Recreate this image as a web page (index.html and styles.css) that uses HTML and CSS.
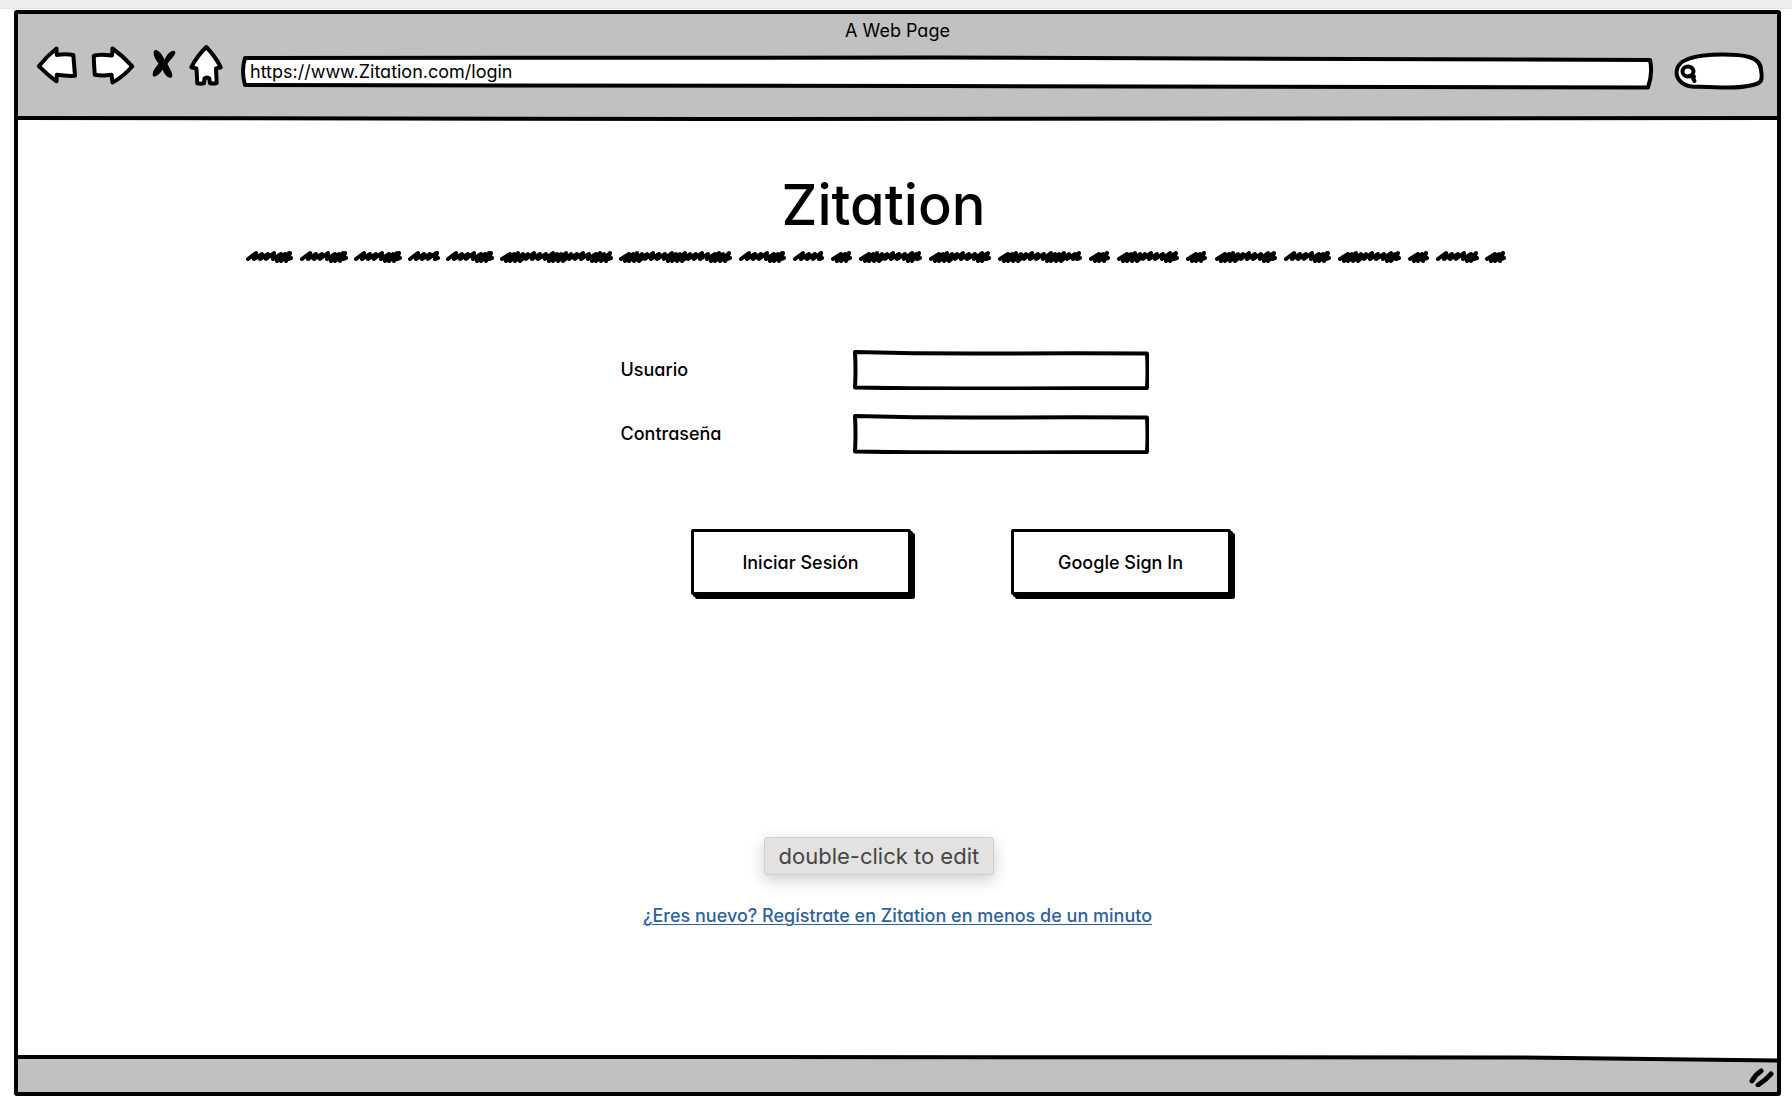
FILE: index.html
```
<!DOCTYPE html>
<html lang="es">
<head>
<meta charset="utf-8">
<title>Zitation</title>
<link rel="stylesheet" href="styles.css">
</head>
<body>
<div class="strip"></div>
<div class="window">
  <header class="chrome">
    <div class="chrome-title">A Web Page</div>
    <div class="toolbar">
      <nav class="nav">
        <button type="button" aria-label="Atrás"><svg class="icon" width="42" height="44" viewBox="0 0 42 44"><path d="M2.8 23.2Q11 13 20.5 5.5L20.8 12Q29 10.6 37.3 12L39 32.8Q30 33.2 20.8 31.8L20.5 38.3Q11 31.500 2.800 23.200Z"/></svg></button>
        <button type="button" aria-label="Adelante"><svg class="icon" width="46" height="44" viewBox="0 0 46 44"><path d="M3.700 13Q8 10.700 22 12.500L22.500 5.500Q33 13 42.300 23.300Q33 34 22.500 39.500L21.500 31.800Q12 33 4.800 31.800Q4 22 3.700 13Z"/></svg></button>
        <button type="button" aria-label="Detener"><svg class="icon-solid" width="28" height="44" viewBox="0 0 28 44"><path d="M6 8C8 5 14 10 16.500 17C19 10 25 6 27 8.500C29 11 22 17 19.500 21C22 26 26 32 23.500 34.500C20 36 16 31 14.500 26.500C12 31 7 35 5 33C3.500 29 8 24 10.500 20.500C7 16 4.500 11 6 8Z"/></svg></button>
        <button type="button" aria-label="Inicio"><svg class="icon" width="38" height="44" viewBox="0 0 38 44"><path d="M18.300 4Q27 13 32.800 24.300L28 25.500L28.700 40Q25 41 22 40.300L21.300 35.500Q18.500 33.500 16.500 35.500L16 40.300Q12 41 9.300 40.300L8.500 25.500L3.300 24.300Q9 13 18.300 4Z"/></svg></button>
      </nav>
      <div class="address">
        <svg class="outline" viewBox="0 0 1414 36" preserveAspectRatio="none"><path d="M5 3Q1 16 5 30Q400 29.500 700 31T1408 32.500Q1413 18 1410 5Q1000 3.500 700 2.500T5 3Z"/></svg>
        <input type="text" aria-label="Dirección" value="https://www.Zitation.com/login">
      </div>
      <div class="search">
        <svg class="outline" viewBox="0 0 90 40"><path d="M2.500 20C2.500 8 20 2.500 49 2.500C68 2.500 87 4 87 18C89 29 87 31 79 33C62 37 42 35.500 18 34.500C8 33.500 2.500 27 2.500 20Z"/><path d="M19.500 19.500A5.500 5 0 1 1 8.500 19.500A5.500 5 0 1 1 19.500 19.500ZM15 24L20 24.500M18 24L20.500 29"/></svg>
        <input type="search" aria-label="Buscar">
      </div>
    </div>
    <svg class="rule" viewBox="0 0 1759 6" preserveAspectRatio="none"><path class="below" d="M0 6V3Q250 4 700 4T1759 3V6Z"/><path class="line" d="M0 3Q250 4 700 4T1759 3"/></svg>
  </header>

  <main class="page">
    <h1>Zitation</h1>
    <svg class="scribble" id="scribble" viewBox="0 0 1260 16"><path d=""/></svg>
    <form class="login">
      <div class="field">
        <label for="user">Usuario</label>
        <div class="box">
          <svg class="outline" viewBox="0 0 296 40" preserveAspectRatio="none"><path d="M2 2Q75 4 148 3.500T294 3.500Q295 20 294 38Q220 38 148 38.500T2 37.500Q3 20 2 2Z"/></svg>
          <input id="user" type="text">
        </div>
      </div>
      <div class="field">
        <label for="pass">Contraseña</label>
        <div class="box">
          <svg class="outline" viewBox="0 0 296 40" preserveAspectRatio="none"><path d="M2 2Q75 4 148 3.500T294 3.500Q295 20 294 38Q220 38 148 38.500T2 37.500Q3 20 2 2Z"/></svg>
          <input id="pass" type="password">
        </div>
      </div>
      <div class="actions">
        <button type="submit">Iniciar Sesión</button>
        <button type="button">Google Sign In</button>
      </div>
    </form>
    <p class="signup">
      <a href="#">¿Eres nuevo? Regístrate en Zitation en menos de un minuto</a>
      <span class="tooltip" role="tooltip">double-click to edit</span>
    </p>
  </main>

  <footer class="status">
    <svg class="status-rule" viewBox="0 0 1759 10" preserveAspectRatio="none"><path class="below" d="M0 0V2Q200 3 600 2T1500 2.500L1759 5.500V0Z"/><path class="line" d="M0 2Q200 3 600 2T1500 2.500L1759 5.500"/></svg>
    <svg class="grip" width="26" height="22" viewBox="0 0 26 22"><path d="M4 16Q7 10 13 6M10 20Q18 15 23 9"/></svg>
  </footer>
</div>
<script src="scribble.js"></script>
</body>
</html>
```
FILE: styles.css
```
* { box-sizing: border-box; }

body {
  margin: 0;
  min-height: 100vh;
  display: flex;
  flex-direction: column;
  background: #fff;
  color: #000;
  font: 400 18px/24px Inter, "Liberation Sans", sans-serif;
  font-feature-settings: "cv11", "calt" 0;
}

button, input { font: inherit; font-feature-settings: inherit; color: inherit; }
svg { display: block; }

.strip { height: 9px; background: #ededed; border-bottom: 1px solid #e2e2e2; }

.window {
  flex: 1;
  display: flex;
  flex-direction: column;
  margin: 1px 11px 8px 14px;
  border: 4px solid #000;
  border-radius: 3px;
}

.chrome { background: #c1c1c1; padding-top: 5px; }
.chrome-title { text-align: center; }

.toolbar {
  display: flex;
  align-items: flex-start;
  height: 72px;
  padding: 0 13px 0 18px;
}

.nav { display: flex; gap: 12px; margin-right: 14px; }
.nav button { display: block; padding: 0; border: 0; background: none; }

.icon { fill: #fff; stroke: #000; stroke-width: 4px; stroke-linejoin: round; stroke-linecap: round; }
.icon-solid { fill: #000; }

.outline {
  position: absolute;
  inset: 0;
  width: 100%;
  height: 100%;
  fill: #fff;
  stroke: #000;
  stroke-width: 4px;
  stroke-linejoin: round;
  stroke-linecap: round;
}
.outline path { vector-effect: non-scaling-stroke; }

.address, .search, .box { position: relative; }
.address input, .search input, .box input {
  position: relative;
  display: block;
  width: 100%;
  height: 32px;
  margin: 0;
  border: 0;
  padding: 0 10px;
  background: none;
  outline: 0;
}
.address { flex: 1; height: 36px; margin: 12px 20px 0 0; }
.search { width: 90px; height: 40px; margin-top: 9px; }
.search input { height: 40px; padding: 0 12px 0 26px; }

.rule { width: 100%; height: 6px; }
.below { fill: #fff; }
.line { fill: none; stroke: #000; stroke-width: 4px; }

.page {
  flex: 1;
  display: flex;
  flex-direction: column;
  align-items: center;
  padding: 50px 44px 0 0;
  font-weight: 500;
}

h1 {
  margin: 0 0 10px 16px;
  font-size: 56px;
  line-height: 68px;
  font-weight: 500;
}

.scribble { width: 75%; max-width: 1260px; height: 16px; }
.scribble path { fill: none; stroke: #000; stroke-width: 4px; stroke-linecap: round; stroke-linejoin: round; }

.login { width: 510px; margin-top: 85px; }
.field { display: grid; grid-template-columns: 232px 296px; margin-bottom: 24px; }
.field label { line-height: 40px; }
.box { height: 40px; }
.box input { height: 40px; }

.actions { display: flex; gap: 100px; margin: 75px 0 0 70px; }
.actions button {
  flex: none;
  width: 220px;
  height: 66px;
  padding: 2px 0 0;
  border: 3px solid #000;
  border-radius: 2px;
  background: #fff;
  box-shadow: 2px 2px 0 #000, 4px 4px 0 #000;
}

.signup { position: relative; margin: 309px 0 0 44px; }
.signup a { color: #2d619f; text-decoration-thickness: 1px; text-underline-offset: 2px; }

.tooltip {
  position: absolute;
  left: 50%;
  bottom: calc(100% + 29px);
  margin-left: -134px;
  padding: 6px 14px;
  border: 1px solid #cfcfcd;
  border-radius: 3px;
  background: #e3e2e0;
  color: #454545;
  font-size: 22px;
  font-weight: 400;
  font-feature-settings: normal;
  white-space: nowrap;
  box-shadow: 0 5px 16px rgba(0, 0, 0, 0.2);
}

.status { display: flex; flex-direction: column; height: 37px; background: #c1c1c1; }
.status-rule { width: 100%; height: 10px; }
.grip { align-self: flex-end; margin-right: 3px; fill: none; stroke: #000; stroke-width: 5px; stroke-linecap: round; }
```
FILE: scribble.js
```
// Dashes of the hand-drawn divider: [start, end], in units of its 1260-wide drawing.
const dashes = [[0,47],[54,102],[108,156],[162,194],[200,248],[254,367],[373,486],[493,540],
  [547,578],[585,606],[613,676],[683,745],[752,836],[843,864],[871,933],[940,961],[969,1031],
  [1038,1085],[1092,1155],[1162,1183],[1190,1233],[1239,1260]];
// Distance between two slanted strokes; small steps make the dense parts.
const steps = [6, 6, 6, 7, 4, 4, 5, 5];
let d = "";
for (const [from, to] of dashes) {
  let x = from + 2;
  let i = to - from < 25 || to - from > 60 ? 4 : 0;
  d += `M${x} 10`;
  while (x + 9 <= to - 2) {
    const top = i % 3 === 0 ? 4 : 5;
    const low = i % 8 > 3 ? 12 : 10;
    d += `L${x + 8} ${top}`;
    x += steps[i % steps.length];
    d += `L${x} ${low}`;
    i += 1;
  }
  d += `L${to - 3} 4L${to - 5} 10L${to - 2} 9`;
}
document.querySelector("#scribble path").setAttribute("d", d);
```
